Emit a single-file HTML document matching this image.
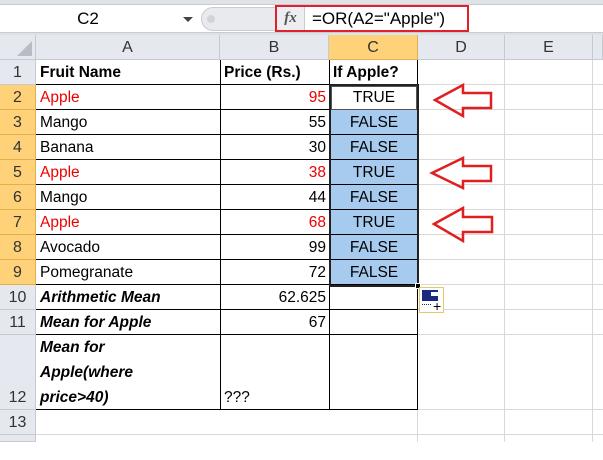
<!DOCTYPE html><html><head><style>
*{margin:0;padding:0;box-sizing:border-box}
body{width:603px;height:442px;overflow:hidden;background:#fff;font-family:"Liberation Sans",sans-serif;position:relative}
div{position:absolute}
.ch{top:35px;height:25px;background:#e5e8ee;border-right:1px solid #c5c9d0;border-bottom:1px solid #c5c9d0;text-align:center;line-height:25px;font-size:16px;color:#333}
.rh{left:0;width:36px;background:#e5e8ee;border-bottom:1px solid #c5c9d0;border-right:1px solid #c5c9d0;text-align:center;font-size:16px;color:#333}
.c{font-size:15.5px;line-height:25px;padding:0 3px;white-space:nowrap;color:#000}
.hl{background:#ffd27a;border-color:#e2b04d}
.gv{top:60px;width:1px;height:382px;background:#d9d9d9}
.gh{left:36px;width:567px;height:1px;background:#d9d9d9}
.bl{background:#000}
</style></head><body>
<div style="left:0;top:0;width:603px;height:35px;background:#dfe3e8"></div>
<div style="left:0;top:4px;width:603px;height:29px;background:#fff;border-top:1px solid #c8ccd2;border-bottom:1px solid #c8ccd2"></div>
<div style="left:60px;top:5px;width:56px;height:27px;font-size:17px;line-height:27px;text-align:center">C2</div>
<div style="left:183px;top:17px;width:0;height:0;border-left:5px solid transparent;border-right:5px solid transparent;border-top:5px solid #444"></div>
<div style="left:201px;top:7px;width:80px;height:24px;border-radius:12px 0 0 12px;background:#e8eaed;border:1px solid #c8ccd2"></div>
<div style="left:207px;top:15px;width:8px;height:8px;border-radius:4px;background:#d0d3d8"></div>
<div style="left:275px;top:5px;width:194px;height:27px;border:2px solid #e0202a;background:#fff"></div>
<div style="left:277px;top:7px;width:28px;height:23px;background:#eceef1;border-right:1px solid #c8ccd2;font-family:'Liberation Serif',serif;font-style:italic;font-weight:bold;font-size:15px;line-height:23px;text-align:center;color:#555">fx</div>
<div style="left:312px;top:7px;height:23px;font-size:17px;line-height:23px">=OR(A2="Apple")</div>
<div class="ch" style="left:0;width:36px"></div>
<div style="left:17px;top:41px;width:0;height:0;border-left:15px solid transparent;border-bottom:15px solid #b9bdc3"></div>
<div class="ch" style="left:36px;width:184px">A</div>
<div class="ch" style="left:220px;width:109px">B</div>
<div class="ch hl" style="left:329px;width:89px">C</div>
<div class="ch" style="left:418px;width:87px">D</div>
<div class="ch" style="left:505px;width:88px">E</div>
<div class="ch" style="left:593px;width:10px"></div>
<div class="gv" style="left:417px"></div><div class="gv" style="left:504px"></div><div class="gv" style="left:592px"></div>
<div class="gh" style="top:84px"></div><div class="gh" style="top:109px"></div><div class="gh" style="top:134px"></div><div class="gh" style="top:159px"></div><div class="gh" style="top:184px"></div><div class="gh" style="top:209px"></div><div class="gh" style="top:234px"></div><div class="gh" style="top:259px"></div><div class="gh" style="top:284px"></div><div class="gh" style="top:309px"></div><div class="gh" style="top:334px"></div><div class="gh" style="top:409px"></div><div class="gh" style="top:434px"></div>
<div class="rh" style="top:60px;height:25px;line-height:25px">1</div>
<div class="rh hl" style="top:85px;height:25px;line-height:25px">2</div>
<div class="rh hl" style="top:110px;height:25px;line-height:25px">3</div>
<div class="rh hl" style="top:135px;height:25px;line-height:25px">4</div>
<div class="rh hl" style="top:160px;height:25px;line-height:25px">5</div>
<div class="rh hl" style="top:185px;height:25px;line-height:25px">6</div>
<div class="rh hl" style="top:210px;height:25px;line-height:25px">7</div>
<div class="rh hl" style="top:235px;height:25px;line-height:25px">8</div>
<div class="rh hl" style="top:260px;height:25px;line-height:25px">9</div>
<div class="rh" style="top:285px;height:25px;line-height:25px">10</div>
<div class="rh" style="top:310px;height:25px;line-height:25px">11</div>
<div class="rh" style="top:335px;height:75px;line-height:125px">12</div>
<div class="rh" style="top:410px;height:25px;line-height:25px">13</div>
<div class="rh" style="top:435px;height:7px"></div>
<div style="left:330px;top:110px;width:88px;height:175px;background:#a6cbef"></div>
<div class="bl" style="left:36px;top:409px;width:382px;height:1px"></div>
<div class="bl" style="left:220px;top:60px;width:1px;height:350px"></div>
<div class="bl" style="left:329px;top:60px;width:1px;height:350px"></div>
<div class="bl" style="left:417px;top:60px;width:1px;height:350px"></div>
<div class="bl" style="left:36px;top:84px;width:382px;height:1px"></div>
<div class="bl" style="left:36px;top:109px;width:382px;height:1px"></div>
<div class="bl" style="left:36px;top:134px;width:382px;height:1px"></div>
<div class="bl" style="left:36px;top:159px;width:382px;height:1px"></div>
<div class="bl" style="left:36px;top:184px;width:382px;height:1px"></div>
<div class="bl" style="left:36px;top:209px;width:382px;height:1px"></div>
<div class="bl" style="left:36px;top:234px;width:382px;height:1px"></div>
<div class="bl" style="left:36px;top:259px;width:382px;height:1px"></div>
<div class="bl" style="left:36px;top:284px;width:382px;height:1px"></div>
<div class="bl" style="left:36px;top:309px;width:382px;height:1px"></div>
<div class="bl" style="left:36px;top:334px;width:382px;height:1px"></div>
<div style="left:329px;top:84px;width:90px;height:203px;border:2px solid #222"></div>
<div style="left:331px;top:86px;width:86px;height:24px;border:1px solid #555;background:#fff"></div>
<div style="left:415px;top:283px;width:6px;height:6px;background:#000;border:1px solid #fff"></div>
<div class="c" style="left:37px;top:60px;font-weight:bold">Fruit Name</div>
<div class="c" style="left:221px;top:60px;font-weight:bold">Price (Rs.)</div>
<div class="c" style="left:330px;top:60px;font-weight:bold">If Apple?</div>
<div class="c" style="left:37px;top:85px;color:#e00">Apple</div>
<div class="c" style="left:37px;top:110px">Mango</div>
<div class="c" style="left:37px;top:135px">Banana</div>
<div class="c" style="left:37px;top:160px;color:#e00">Apple</div>
<div class="c" style="left:37px;top:185px">Mango</div>
<div class="c" style="left:37px;top:210px;color:#e00">Apple</div>
<div class="c" style="left:37px;top:235px">Avocado</div>
<div class="c" style="left:37px;top:260px">Pomegranate</div>
<div class="c" style="left:37px;top:285px;font-weight:bold;font-style:italic">Arithmetic Mean</div>
<div class="c" style="left:37px;top:310px;font-weight:bold;font-style:italic">Mean for Apple</div>
<div class="c" style="left:37px;top:335px;font-weight:bold;font-style:italic;line-height:25px">Mean for<br>Apple(where<br>price&gt;40)</div>
<div class="c" style="left:221px;top:85px;width:108px;text-align:right;color:#e00">95</div>
<div class="c" style="left:221px;top:110px;width:108px;text-align:right">55</div>
<div class="c" style="left:221px;top:135px;width:108px;text-align:right">30</div>
<div class="c" style="left:221px;top:160px;width:108px;text-align:right;color:#e00">38</div>
<div class="c" style="left:221px;top:185px;width:108px;text-align:right">44</div>
<div class="c" style="left:221px;top:210px;width:108px;text-align:right;color:#e00">68</div>
<div class="c" style="left:221px;top:235px;width:108px;text-align:right">99</div>
<div class="c" style="left:221px;top:260px;width:108px;text-align:right">72</div>
<div class="c" style="left:221px;top:285px;width:108px;text-align:right">62.625</div>
<div class="c" style="left:221px;top:310px;width:108px;text-align:right">67</div>
<div class="c" style="left:221px;top:385px">???</div>
<div class="c" style="left:330px;top:85px;width:88px;text-align:center">TRUE</div>
<div class="c" style="left:330px;top:110px;width:88px;text-align:center">FALSE</div>
<div class="c" style="left:330px;top:135px;width:88px;text-align:center">FALSE</div>
<div class="c" style="left:330px;top:160px;width:88px;text-align:center">TRUE</div>
<div class="c" style="left:330px;top:185px;width:88px;text-align:center">FALSE</div>
<div class="c" style="left:330px;top:210px;width:88px;text-align:center">TRUE</div>
<div class="c" style="left:330px;top:235px;width:88px;text-align:center">FALSE</div>
<div class="c" style="left:330px;top:260px;width:88px;text-align:center">FALSE</div>
<div style="left:419px;top:287px;width:25px;height:26px;border:1px solid #e8c860;background:#fff"></div>
<div style="left:422px;top:290px;width:16px;height:11px;background:#1a2a80"></div>
<div style="left:431px;top:292px;width:7px;height:4px;background:#fff"></div>
<div style="left:422px;top:304px;width:9px;height:1px;border-top:1px dotted #1a2a80"></div>
<div style="left:433px;top:300px;font-size:14px;line-height:12px">+</div>
<svg style="position:absolute;left:0;top:0" width="603" height="442">
<g fill="none" stroke="#e02020" stroke-width="2.5">
<path d="M435,100 L463,85 L463,93 L491,93 L491,108 L463,108 L463,116 Z"/>
<path d="M432,173 L463,158 L463,166 L491,166 L491,181 L463,181 L463,188 Z"/>
<path d="M434,224 L463,208 L463,217 L492,217 L492,232 L463,232 L463,241 Z"/>
</g></svg>
</body></html>
